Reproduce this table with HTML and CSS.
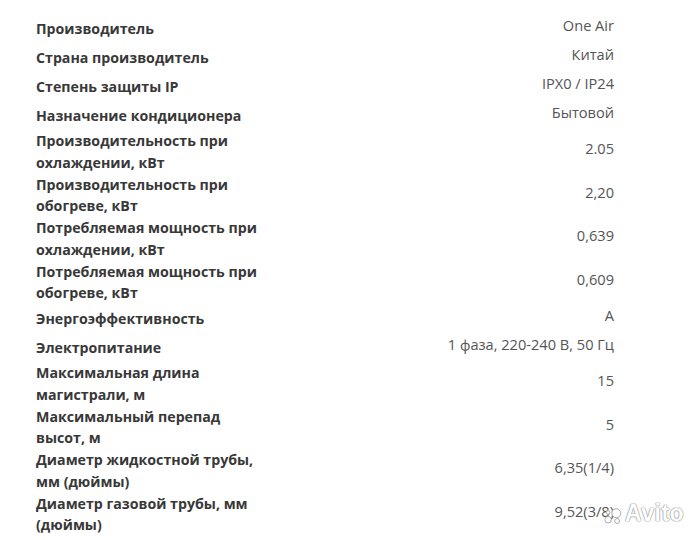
FILE: index.html
```html
<!DOCTYPE html>
<html lang="ru">
<head>
    <meta charset="UTF-8">
    <meta name="viewport" content="width=device-width, initial-scale=1.0">
    <title>Характеристики</title>
    <link rel="stylesheet" href="styles.css">
</head>
<body>
    <div class="specs">
        <div class="row"><div class="name">Производитель</div><div class="value">One Air</div></div>
        <div class="row"><div class="name">Страна производитель</div><div class="value">Китай</div></div>
        <div class="row"><div class="name">Степень защиты IP</div><div class="value">IPX0 / IP24</div></div>
        <div class="row"><div class="name">Назначение кондиционера</div><div class="value">Бытовой</div></div>
        <div class="row"><div class="name">Производительность при охлаждении, кВт</div><div class="value">2.05</div></div>
        <div class="row"><div class="name">Производительность при обогреве, кВт</div><div class="value">2,20</div></div>
        <div class="row"><div class="name">Потребляемая мощность при охлаждении, кВт</div><div class="value">0,639</div></div>
        <div class="row"><div class="name">Потребляемая мощность при обогреве, кВт</div><div class="value">0,609</div></div>
        <div class="row"><div class="name">Энергоэффективность</div><div class="value">A</div></div>
        <div class="row"><div class="name">Электропитание</div><div class="value">1 фаза, 220-240 В, 50 Гц</div></div>
        <div class="row"><div class="name">Максимальная длина магистрали, м</div><div class="value">15</div></div>
        <div class="row"><div class="name">Максимальный перепад высот, м</div><div class="value">5</div></div>
        <div class="row"><div class="name">Диаметр жидкостной трубы, мм (дюймы)</div><div class="value">6,35(1/4)</div></div>
        <div class="row"><div class="name">Диаметр газовой трубы, мм (дюймы)</div><div class="value">9,52(3/8)</div></div>
    </div>

    <div class="watermark">
        <svg width="18" height="17" viewBox="0 0 22 20">
            <circle cx="15" cy="6" r="5.5"/>
            <circle cx="5" cy="14" r="4"/>
            <circle cx="16" cy="15.5" r="3"/>
            <circle cx="5" cy="5" r="2.2"/>
        </svg>
        <span>Avito</span>
    </div>
</body>
</html>
```

FILE: styles.css
```css
body {
    margin: 0;
    background-color: #ffffff;
    font-family: "Open Sans", Arial, sans-serif;
    height: 540px;
    overflow: hidden;
    position: relative;
}
.specs {
    padding: 14px 85px 0 36px;
}
.row {
    display: flex;
    align-items: center;
    justify-content: space-between;
    min-height: 29px;
}
.name {
    width: 236px;
    font-size: 14.2px;
    font-weight: 700;
    line-height: 21.75px;
    color: #383838;
}
.value {
    font-size: 14.6px;
    line-height: 22px;
    padding-bottom: 7px;
    color: #555555;
    text-align: right;
}
.watermark {
    position: absolute;
    left: 604px;
    top: 500px;
    display: flex;
    align-items: center;
    gap: 3px;
    color: #ffffff;
}
.watermark svg {
    fill: #ffffff;
    stroke: #a8a8a8;
    stroke-width: 1.2;
    margin-top: 6px;
}
.watermark span {
    font-family: "Liberation Sans", Arial, sans-serif;
    font-size: 23px;
    font-weight: 700;
    letter-spacing: 0.5px;
    text-shadow: 0 0 1px #888888, 0 0 1px #888888, 0 0 2px #bbbbbb;
}
```
